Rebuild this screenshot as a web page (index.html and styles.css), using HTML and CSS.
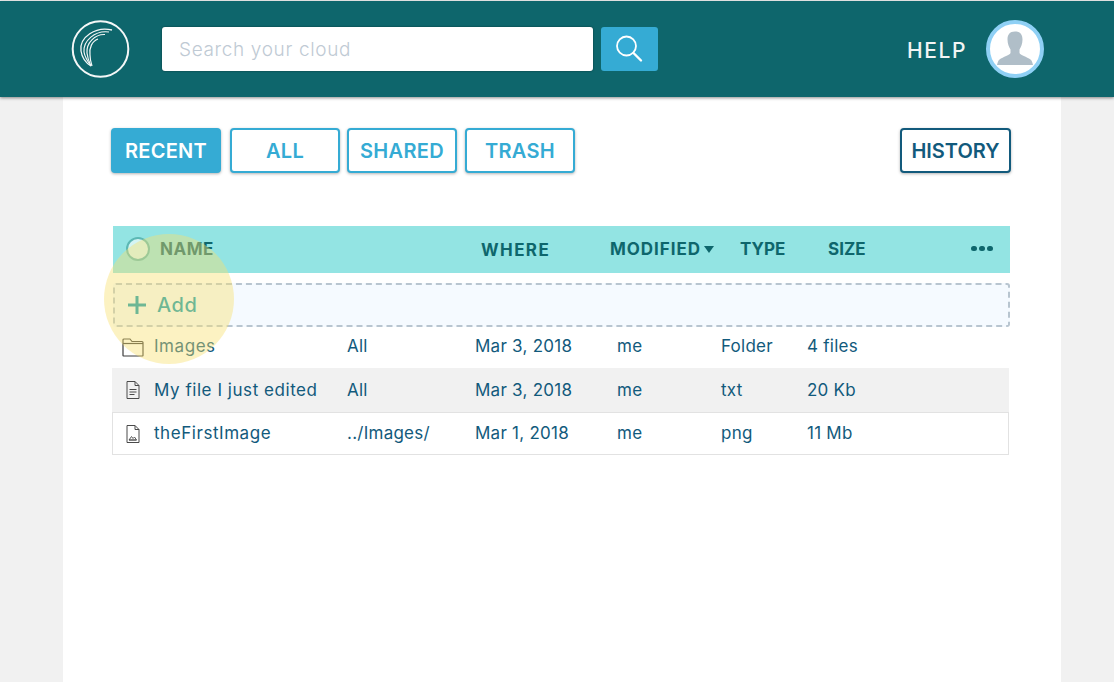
FILE: index.html
```html
<!DOCTYPE html>
<html lang="en">
<head>
<meta charset="UTF-8">
<meta name="viewport" content="width=device-width, initial-scale=1.0">
<title>Your cloud</title>
<link rel="stylesheet" href="styles.css">
</head>
<body>
<div class="page">
    <header class="topbar">
        <svg class="logo" width="60" height="60" viewBox="0 0 60 60" fill="none" stroke="#f4f7f7">
            <circle cx="29.5" cy="30" r="27.8" stroke-width="2"/>
            <path stroke-width="1.300" d="M41 11C25 7 8 18 10 32 11 39 15 44 20 47"/>
            <path stroke-width="1.200" d="M38 13C24 11 12 22 13 33 14 39 17 43 20 47"/>
            <path stroke-width="1.200" d="M34 15.500C24 15 15 24 16 34 16.500 39 18 43 20 47"/>
            <path stroke-width="1.200" d="M27 20C21 22 18 29 19 36 19 40 20 44 21 47"/>
        </svg>
        <div class="search-box">Search your cloud</div>
        <button class="search-btn" type="button">
            <svg width="30" height="30" viewBox="0 0 30 30" fill="none" stroke="#fff">
                <circle cx="11.500" cy="12" r="9.500" stroke-width="1.800"/>
                <path stroke-width="2.400" stroke-linecap="round" d="M18.500 19L26 26.500"/>
            </svg>
        </button>
        <a class="help-link">HELP</a>
        <div class="avatar">
            <svg width="38" height="38" viewBox="0 0 38 38" fill="#b0bec8">
                <path d="M19 1.500C13.500 1.500 11.500 5 11.500 9.500 11.500 14 13 17 14.500 19.500L14.500 23C14 25 7 27 3.500 29.500 2 30.500 1.500 33 1 35L37 35C36.500 33 36 30.500 34.500 29.500 31 27 24 25 23.500 23L23.500 19.500C25 17 26.500 14 26.500 9.500 26.500 5 24.500 1.500 19 1.500Z"/>
            </svg>
        </div>
    </header>

    <main class="content">
        <div class="toolbar">
            <button class="tab tab-active" type="button">RECENT</button>
            <button class="tab tab-all" type="button">ALL</button>
            <button class="tab" type="button">SHARED</button>
            <button class="tab" type="button">TRASH</button>
            <button class="history-btn" type="button">HISTORY</button>
        </div>

        <div class="list-head">
            <span class="select-all"></span>
            <span class="name-head">NAME</span>
            <span class="where-head">WHERE</span>
            <span class="modified-head">MODIFIED<i class="sort-arrow"></i></span>
            <span>TYPE</span>
            <span>SIZE</span>
            <span class="more-dots"><i></i><i></i><i></i></span>
        </div>

        <div class="add-row">
            <svg width="18" height="18" viewBox="0 0 18 18" fill="#0c9ab0"><path d="M7.500 0h3v7.500H18v3h-7.500V18h-3v-7.500H0v-3h7.500z"/></svg>
            <span>Add</span>
        </div>

        <div class="file-list">
            <div class="file-row">
                <svg width="22" height="20" viewBox="0 0 22 20" fill="#fff" stroke="#3c3c3c" stroke-width="1.200">
                    <path d="M1 18.500V3a1 1 0 0 1 1-1h6l2 2.500h10a1 1 0 0 1 1 1V18.500a.5.500 0 0 1-.5.500H1.500a.5.500 0 0 1-.5-.5z"/>
                    <path d="M1 6.500h20"/>
                </svg>
                <span class="file-name">Images</span>
                <span>All</span>
                <span>Mar 3, 2018</span>
                <span>me</span>
                <span>Folder</span>
                <span>4 files</span>
            </div>
            <div class="file-row file-row-hover">
                <svg width="22" height="20" viewBox="0 0 22 20" fill="none" stroke="#4a4a4a" stroke-width="1">
                    <path d="M5 1.500h8l4 4V18.500H5z"/>
                    <path d="M13 1.500V5.500h4M7.500 9.500h7M7.500 12h7M7.500 14.500h5"/>
                </svg>
                <span class="file-name">My file I just edited</span>
                <span>All</span>
                <span>Mar 3, 2018</span>
                <span>me</span>
                <span>txt</span>
                <span>20 Kb</span>
            </div>
            <div class="file-row file-row-bordered">
                <svg width="22" height="20" viewBox="0 0 22 20" fill="none" stroke="#4a4a4a" stroke-width="1">
                    <path d="M5 1.500h8l4 4V18.500H5z"/>
                    <path d="M13 1.500V5.500h4"/>
                    <path stroke-width=".9" d="M7 16l2.500-3.500 1.500 2 1.500-1.500 2 3zM7 16h7.500"/>
                </svg>
                <span class="file-name">theFirstImage</span>
                <span>../Images/</span>
                <span>Mar 1, 2018</span>
                <span>me</span>
                <span>png</span>
                <span>11 Mb</span>
            </div>
        </div>
    </main>

    <div class="spotlight"></div>
</div>
</body>
</html>
```

FILE: styles.css
```css
body {
    font-family: Inter, "Open Sans", sans-serif;
    background-color: #fff;
    color: #125a7c;
    margin: 0;
    padding: 0;
    overflow: hidden;
}

button {
    font-family: inherit;
    cursor: pointer;
}

.page {
    position: relative;
    width: 1114px;
    height: 682px;
    padding-top: 1px;
    box-sizing: border-box;
    background-color: #f1f1f1;
    overflow: hidden;
}

.topbar {
    position: relative;
    z-index: 1;
    display: flex;
    align-items: center;
    height: 96px;
    padding: 0 70px 0 71px;
    background-color: #0e666c;
    box-shadow: 0 1px 3px rgba(0, 0, 0, 0.45);
}

.logo {
    flex-shrink: 0;
    margin-right: 31px;
}

.search-box {
    box-sizing: border-box;
    width: 431px;
    height: 44px;
    padding: 0 17px;
    margin-right: 8px;
    line-height: 46px;
    font-size: 19px;
    font-weight: 300;
    letter-spacing: 0.65px;
    color: #c0cad4;
    background-color: #fff;
    border-radius: 3px;
    box-shadow: 0 0 2px rgba(0, 0, 0, 0.5);
}

.search-btn {
    display: flex;
    align-items: center;
    justify-content: center;
    width: 57px;
    height: 44px;
    padding: 0;
    border: none;
    border-radius: 3px;
    background-color: #35abd4;
}

.help-link {
    margin-left: auto;
    margin-right: 19px;
    padding-top: 2px;
    font-size: 21px;
    font-weight: 500;
    letter-spacing: 1.6px;
    color: #f2f5f5;
}

.avatar {
    display: flex;
    align-items: center;
    justify-content: center;
    box-sizing: border-box;
    width: 58px;
    height: 58px;
    border: 4px solid #8fd0f5;
    border-radius: 50%;
    background-color: #fff;
}

.content {
    box-sizing: border-box;
    width: 998px;
    height: 585px;
    margin-left: 63px;
    padding: 31px 50px 0 48px;
    background-color: #fff;
}

.toolbar {
    display: flex;
    gap: 8px;
    height: 45px;
    margin-bottom: 53px;
}

.tab {
    box-sizing: border-box;
    width: 110px;
    height: 45px;
    padding: 0;
    font-size: 20px;
    font-weight: 600;
    letter-spacing: 0.3px;
    color: #35abd4;
    background-color: #fff;
    border: 2px solid #35abd4;
    border-radius: 4px;
    box-shadow: 0 1px 3px rgba(0, 0, 0, 0.3);
}

.tab-all {
    margin: 0 -1px 0 1px;
}

.tab-active {
    color: #fff;
    background-color: #35abd4;
}

.history-btn {
    box-sizing: border-box;
    width: 111px;
    height: 45px;
    padding: 0;
    margin-left: auto;
    font-size: 20px;
    font-weight: 600;
    color: #125a7c;
    background-color: #fff;
    border: 2px solid #125a7c;
    border-radius: 4px;
    box-shadow: 0 1px 3px rgba(0, 0, 0, 0.3);
}

.list-head {
    display: grid;
    grid-template-columns: 34px 321px 129px 130px 88px 143px 22px;
    align-items: center;
    width: 897px;
    height: 47px;
    box-sizing: border-box;
    padding: 0 0 2px 13px;
    margin-left: 2px;
    font-size: 17px;
    font-weight: 700;
    color: #0e666c;
    background-color: #93e4e3;
}

.select-all {
    box-sizing: border-box;
    width: 24px;
    height: 24px;
    border: 2px solid #5cb8b4;
    border-radius: 50%;
    background-color: rgba(255, 255, 255, 0.6);
}

.name-head {
    letter-spacing: 0.5px;
}

.where-head {
    padding-top: 2px;
    letter-spacing: 1.4px;
}

.modified-head {
    display: flex;
    align-items: center;
    letter-spacing: 0.95px;
}

.sort-arrow {
    width: 0;
    height: 0;
    margin: 2px 0 0 3px;
    border-left: 5px solid transparent;
    border-right: 5px solid transparent;
    border-top: 7px solid #0e666c;
}

.more-dots {
    display: flex;
    gap: 2.500px;
}

.more-dots i {
    width: 5.500px;
    height: 5.500px;
    border-radius: 50%;
    background-color: #0e666c;
}

.add-row {
    display: flex;
    align-items: center;
    gap: 11px;
    box-sizing: border-box;
    width: 897px;
    height: 44px;
    margin: 10px 0 0 2px;
    padding-left: 13px;
    font-size: 20px;
    font-weight: 500;
    letter-spacing: 0.6px;
    color: #0c9ab0;
    background-color: #f5faff;
    border: 2px dashed #b8c5d0;
    border-radius: 3px;
}

.file-list {
    width: 897px;
    margin: -2px 0 0 1px;
    font-size: 17px;
    letter-spacing: 0.25px;
}

.file-row {
    display: grid;
    grid-template-columns: 32px 193px 128px 142px 104px 86px 1fr;
    align-items: center;
    box-sizing: border-box;
    height: 43px;
    padding-left: 10px;
}

.file-row span {
    padding-bottom: 2px;
}

.file-row .file-name {
    letter-spacing: 0.55px;
}

.file-row-hover {
    height: 44px;
    background-color: #f1f1f1;
}

.file-row-hover span {
    padding-bottom: 0;
}

.file-row-bordered {
    border: 1px solid #e2e2e2;
    padding-left: 9px;
}

.spotlight {
    position: absolute;
    left: 104px;
    top: 234px;
    width: 130px;
    height: 130px;
    border-radius: 50%;
    background-color: rgba(248, 225, 110, 0.42);
}
```
